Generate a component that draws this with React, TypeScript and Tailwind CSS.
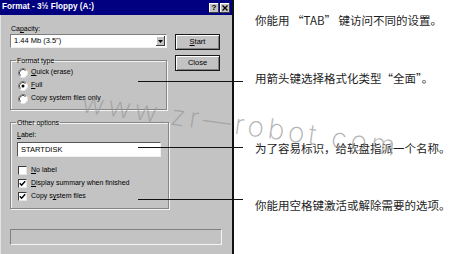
import React from "react";

const sans = "font-['Liberation_Sans',Arial,sans-serif]";

function Radio({ checked }: { checked?: boolean }) {
  return (
    <svg width="10" height="10" viewBox="0 0 10 10" className="shrink-0">
      <circle cx="5" cy="5" r="4.5" fill="#fff" />
      <path d="M8.2 1.8 A4.5 4.5 0 0 0 1.8 8.2" stroke="#7c7c7c" strokeWidth="1" fill="none" />
      <path d="M1.8 8.2 A4.5 4.5 0 0 0 8.2 1.8" stroke="#e8e8e8" strokeWidth="1" fill="none" />
      <path d="M7.5 2.5 A3.5 3.5 0 0 0 2.5 7.5" stroke="#222" strokeWidth="0.8" fill="none" />
      {checked && <circle cx="5" cy="5" r="1.5" fill="#000" />}
    </svg>
  );
}

function Check({ checked }: { checked?: boolean }) {
  return (
    <div className="w-[9px] h-[9px] shrink-0 bg-white border-t border-l border-[#3a3a3a] border-r border-b border-r-[#e6e6e6] border-b-[#e6e6e6] flex items-center justify-center">
      {checked && (
        <svg width="7" height="7" viewBox="0 0 7 7">
          <path d="M0.8 3.2 L2.6 5.2 L6.2 1.2" stroke="#000" strokeWidth="1.4" fill="none" />
        </svg>
      )}
    </div>
  );
}

function Btn({ children }: { children: React.ReactNode }) {
  return (
    <div className="w-[45px] h-[16px] bg-[#c3c3c3] border border-[#1a1a1a] shadow-[inset_1px_1px_0_#fff,inset_-1px_-1px_0_#808080] flex items-center justify-center text-[7.5px] text-black">
      {children}
    </div>
  );
}

export default function App() {
  return (
    <div className={`relative w-[453px] h-[254px] bg-white overflow-hidden flex ${sans}`}>
      {/* Dialog */}
      <div className="w-[234px] h-full shrink-0 bg-[#c3c3c3] border-l border-[#e4e4e4] border-r-2 border-r-[#111] flex flex-col">
        {/* Title bar */}
        <div className="h-[15px] bg-[#000080] flex items-center pl-[2px] pr-[2px] -ml-px">
          <span className="text-white font-bold text-[8.2px] leading-none">Format - 3½ Floppy (A:)</span>
          <div className="ml-auto flex gap-[1px]">
            <div className="w-[10px] h-[10px] bg-[#c3c3c3] shadow-[inset_-1px_-1px_0_#404040,inset_1px_1px_0_#fff] flex items-center justify-center text-[8px] font-bold leading-none text-black">?</div>
            <div className="w-[10px] h-[10px] bg-[#c3c3c3] shadow-[inset_-1px_-1px_0_#404040,inset_1px_1px_0_#fff] flex items-center justify-center">
              <svg width="6" height="6" viewBox="0 0 6 6">
                <path d="M0.5 0.5 L5.5 5.5 M5.5 0.5 L0.5 5.5" stroke="#000" strokeWidth="1.4" />
              </svg>
            </div>
          </div>
        </div>

        {/* Body */}
        <div className="flex pl-[9px] pt-[9px] text-[7px] text-black">
          {/* Left column */}
          <div className="w-[159px] flex flex-col">
            <div className="h-[10px] leading-[10px] pl-[1px]">
              Ca<span className="underline">p</span>acity:
            </div>
            <div className="w-[157px] h-[14px] bg-white border-t border-l border-[#808080] border-r border-b border-r-[#f0f0f0] border-b-[#f0f0f0] flex items-center pl-[3px]">
              <span className="text-[7.5px]">1.44 Mb (3.5")</span>
              <div className="ml-auto mr-[1px] w-[9px] h-[10px] bg-[#c3c3c3] shadow-[inset_-1px_-1px_0_#404040,inset_1px_1px_0_#fff] flex items-center justify-center">
                <svg width="5" height="3" viewBox="0 0 5 3">
                  <path d="M0 0 L5 0 L2.5 3 Z" fill="#000" />
                </svg>
              </div>
            </div>

            <fieldset className="mt-[8px] w-[157px] border border-[#858585] shadow-[inset_1px_1px_0_#f4f4f4,1px_1px_0_#f4f4f4] pl-[7px] pb-[4px]">
              <legend className="ml-[-2px] px-[1px] h-[9px] leading-[9px] text-[7px]">Format type</legend>
              <div className="h-[13px] flex items-center gap-[3px] mt-[1px]">
                <Radio />
                <span><span className="underline">Q</span>uick (erase)</span>
              </div>
              <div className="h-[13px] flex items-center gap-[3px]">
                <Radio checked />
                <span><span className="underline">F</span>ull</span>
              </div>
              <div className="h-[13px] flex items-center gap-[3px]">
                <Radio />
                <span>Copy system files only</span>
              </div>
            </fieldset>

            <fieldset className="mt-[8px] w-[159px] border border-[#858585] shadow-[inset_1px_1px_0_#f4f4f4,1px_1px_0_#f4f4f4] pl-[6px] pb-[5px]">
              <legend className="ml-[-1px] px-[1px] h-[9px] leading-[9px] text-[7px]">Other options</legend>
              <div className="h-[10px] leading-[10px] mt-[3px]">
                <span className="underline">L</span>abel:
              </div>
              <div className="mt-[2px] w-[144px] h-[15px] bg-white border-t border-l border-[#555] border-r border-b border-r-[#f0f0f0] border-b-[#f0f0f0] flex items-center pl-[3px] text-[7.5px]">
                STARTDISK
              </div>
              <div className="mt-[7px] h-[13px] flex items-center gap-[4px] pl-[1px]">
                <Check />
                <span><span className="underline">N</span>o label</span>
              </div>
              <div className="h-[13px] flex items-center gap-[4px] pl-[1px]">
                <Check checked />
                <span><span className="underline">D</span>isplay summary when finished</span>
              </div>
              <div className="h-[13px] flex items-center gap-[4px] pl-[1px]">
                <Check checked />
                <span>Copy s<span className="underline">y</span>stem files</span>
              </div>
            </fieldset>
          </div>

          {/* Buttons */}
          <div className="ml-[6px] flex flex-col pt-[10px] gap-[5px]">
            <Btn><span><span className="underline">S</span>tart</span></Btn>
            <Btn>Close</Btn>
          </div>
        </div>

        {/* Progress */}
        <div className="ml-[9px] mt-[20px] w-[212px] h-[16px] border-t border-l border-[#808080] border-r border-b border-r-[#f4f4f4] border-b-[#f4f4f4]" />
      </div>

      {/* Annotation texts */}
      <div className="flex flex-col pl-[21px] font-['Noto_Sans_CJK_SC',sans-serif] text-[11.5px] text-[#1e1e1e] whitespace-nowrap">
        <div className="mt-[12px] h-[16px] leading-[16px]">你能用 “TAB” 键访问不同的设置。</div>
        <div className="mt-[42px] h-[16px] leading-[16px]">用箭头键选择格式化类型“全面”。</div>
        <div className="mt-[54px] h-[16px] leading-[16px]">为了容易标识，给软盘指派一个名称。</div>
        <div className="mt-[41px] h-[16px] leading-[16px]">你能用空格键激活或解除需要的选项。</div>
      </div>

      {/* Leader lines */}
      <div className="absolute left-[138px] top-[81px] w-[105px] h-px bg-[#111]" />
      <div className="absolute left-[138px] top-[147px] w-[105px] h-px bg-[#111]" />
      <div className="absolute left-[138px] top-[199px] w-[105px] h-px bg-[#111]" />

      {/* Watermark */}
      <div className="absolute left-[82px] top-[88px] origin-left rotate-[8deg] font-['Inter',sans-serif] font-extralight text-[28px] leading-none tracking-[4px] text-[#9a9a9a] opacity-75 whitespace-nowrap pointer-events-none">
        www.zr—robot.com
      </div>
    </div>
  );
}
